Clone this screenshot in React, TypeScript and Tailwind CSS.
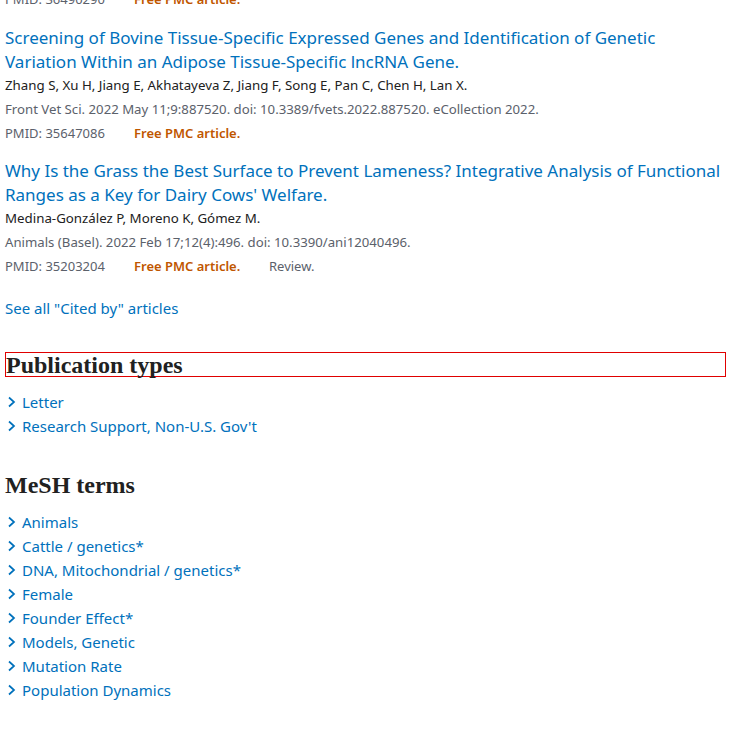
import React from "react";

const Chevron = () => (
  <svg width="9" height="12" viewBox="0 0 9 12" className="shrink-0 mr-[6px]" fill="none">
    <path d="M2 1.5 L7 6 L2 10.5" stroke="#0071bc" strokeWidth="1.7" />
  </svg>
);

const sans = { fontFamily: '"Noto Sans", "Open Sans", sans-serif' };
const serif = { fontFamily: '"Liberation Serif", "DejaVu Serif", serif' };

function Item({ text }: { text: string }) {
  return (
    <div className="flex items-center h-[24px] pl-[2px] text-[15px] text-[#0071bc]">
      <Chevron />
      <span>{text}</span>
    </div>
  );
}

function Meta({ pmid, review }: { pmid: string; review?: boolean }) {
  return (
    <div className="flex h-[24px] items-center text-[13px]">
      <span className="text-[#5b616b] w-[129px]">PMID: {pmid}</span>
      <span className="text-[#c05600] font-semibold w-[135px]">Free PMC article.</span>
      {review && <span className="text-[#5b616b]">Review.</span>}
    </div>
  );
}

function Article({ title, authors, journal, pmid, review }: { title: string; authors: string; journal: string; pmid: string; review?: boolean }) {
  return (
    <div className="flex flex-col">
      <div className="text-[17px] leading-[24px] text-[#0071bc]">{title}</div>
      <div className="h-[24px] flex items-center text-[13.3px] text-[#212121]">{authors}</div>
      <div className="h-[24px] flex items-center text-[13.2px] text-[#5b616b]">{journal}</div>
      <Meta pmid={pmid} review={review} />
    </div>
  );
}

export default function App() {
  return (
    <div className="w-[730px] h-[730px] overflow-hidden bg-white" style={sans}>
      <div className="pl-[5px] pr-[4px] mt-[-12px] flex flex-col">
        <Meta pmid="36490290" />
        <div className="h-[14px]" />
        <div className="flex flex-col gap-[13px]">
          <Article
            title="Screening of Bovine Tissue-Specific Expressed Genes and Identification of Genetic Variation Within an Adipose Tissue-Specific lncRNA Gene."
            authors="Zhang S, Xu H, Jiang E, Akhatayeva Z, Jiang F, Song E, Pan C, Chen H, Lan X."
            journal="Front Vet Sci. 2022 May 11;9:887520. doi: 10.3389/fvets.2022.887520. eCollection 2022."
            pmid="35647086"
          />
          <Article
            title="Why Is the Grass the Best Surface to Prevent Lameness? Integrative Analysis of Functional Ranges as a Key for Dairy Cows' Welfare."
            authors="Medina-González P, Moreno K, Gómez M."
            journal="Animals (Basel). 2022 Feb 17;12(4):496. doi: 10.3390/ani12040496."
            pmid="35203204"
            review
          />
        </div>
        <div className="mt-[17px] h-[24px] flex items-center text-[15px] text-[#0071bc]">See all "Cited by" articles</div>

        <div className="mt-[32px] border border-[#e00000] h-[25px] flex items-center text-[24px] font-bold text-[#212121]" style={serif}>
          Publication types
        </div>
        <div className="mt-[13px] flex flex-col">
          <Item text="Letter" />
          <Item text="Research Support, Non-U.S. Gov't" />
        </div>

        <div className="mt-[34px] h-[26px] flex items-center text-[24px] font-bold text-[#212121]" style={serif}>
          MeSH terms
        </div>
        <div className="mt-[12px] flex flex-col">
          {[
            "Animals",
            "Cattle / genetics*",
            "DNA, Mitochondrial / genetics*",
            "Female",
            "Founder Effect*",
            "Models, Genetic",
            "Mutation Rate",
            "Population Dynamics",
          ].map((t) => (
            <Item key={t} text={t} />
          ))}
        </div>
      </div>
    </div>
  );
}
